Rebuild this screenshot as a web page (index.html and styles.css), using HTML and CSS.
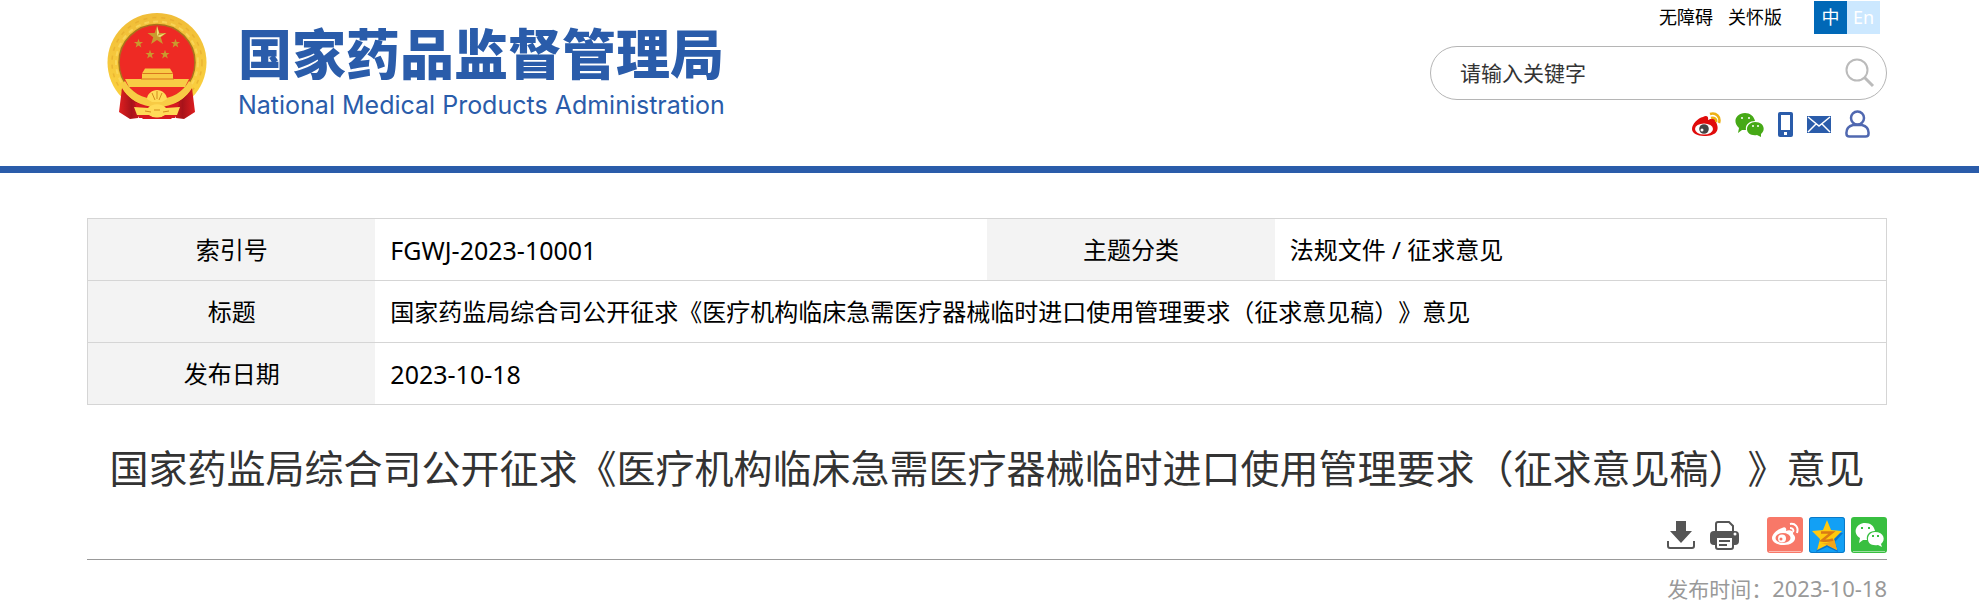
FILE: index.html
```
<!DOCTYPE html>
<html lang="zh-CN">
<head>
  <meta charset="UTF-8">
  <meta name="viewport" content="width=device-width, initial-scale=1.0">
  <title>国家药监局综合司公开征求意见</title>
  <link rel="stylesheet" href="styles.css">
</head>
<body>
  <!-- 头部 -->
  <header class="header">
    <div class="wrap header-inner">
      <div class="logo">
        <svg class="emblem" viewBox="0 0 100 106" aria-hidden="true">
          <defs>
            <linearGradient id="gold" x1="0" y1="0" x2="0" y2="1">
              <stop offset="0" stop-color="#f0bd38"/>
              <stop offset="1" stop-color="#fcd440"/>
            </linearGradient>
            <linearGradient id="drape" x1="0" y1="0" x2="1" y2="0">
              <stop offset="0" stop-color="#e01f20"/>
              <stop offset=".5" stop-color="#a8131a"/>
              <stop offset="1" stop-color="#dd1d20"/>
            </linearGradient>
            <path id="star" d="M0-10 2.4-3.1H9.5L3.8 1.2 5.9 8.1 0 4-5.9 8.1-3.8 1.2-9.5-3.1H-2.4Z"/>
          </defs>
          <circle cx="50" cy="49.500" r="49.500" fill="url(#gold)"/>
          <circle cx="50" cy="49.500" r="45" fill="none" stroke="#e2a62c" stroke-width="1.500" stroke-dasharray="4 5" opacity=".6"/>
          <circle cx="50" cy="49.500" r="41" fill="none" stroke="#fbdc62" stroke-width="2" stroke-dasharray="5 4" opacity=".7"/>
          <circle cx="50" cy="49.500" r="38" fill="#ee2a24" stroke="#a8741c" stroke-width="1.500"/>
          <g fill="#c99a2e">
            <use href="#star" x="50" y="23"/>
            <use href="#star" transform="translate(31.500 30.500) scale(.48)"/>
            <use href="#star" transform="translate(68.500 30.500) scale(.48)"/>
            <use href="#star" transform="translate(43 41.500) scale(.48)"/>
            <use href="#star" transform="translate(58 41.500) scale(.48)"/>
          </g>
          <path fill="#f4e07a" d="M50 13l2 7-2 3zM50 23l9-3-6 4z"/>
          <path fill="#f8cb45" d="M38 55.500h25l3 5H35zM35 61h31v5H35zM18 66h64l-4 8H22z"/>
          <path stroke="#d9771f" stroke-width="1" d="M36 60.500h29M34 66h33"/>
          <path fill="url(#drape)" d="M15 75c6 10 14 14 22 17l-6 13-8 1-11-7z"/>
          <path fill="url(#drape)" d="M85 75c-6 10-14 14-22 17l6 13 8 1 11-7z"/>
          <path fill="#d71920" d="M28 90h44l-4 15H32z"/>
          <path fill="#f8cb45" d="M14 72c6 14 20 22 36 22s30-8 36-22l-4-4c-6 11-17 18-32 18s-26-7-32-18z"/>
          <path fill="#ffdb58" d="M40 86c0-5 5-9 10-9s10 4 10 9l-5 3H45zM27 94l14 1c4-5 14-5 18 0l14-1-3 8-12 0c-5 4-11 4-16 0l-12 0z"/>
          <path stroke="#d28b1c" fill="none" d="M50 78v8M45 80l3 7M55 80l-3 7M38 98l6 1M62 98l-6 1M47 97h6"/>
          <path fill="#d71920" d="M33 103h10c4 2 10 2 14 0h10l-3 3H36z"/>
        </svg>
        <div class="logo-text">
          <div class="logo-cn">国家药品监督管理局</div>
          <div class="logo-en">National Medical Products Administration</div>
        </div>
      </div>

      <div class="tools">
        <div class="top-links">
          <a href="#">无障碍</a>
          <a href="#">关怀版</a>
          <div class="lang">
            <a class="on" href="#">中</a>
            <a href="#">En</a>
          </div>
        </div>
        <form class="search">
          <input type="text" placeholder="请输入关键字" aria-label="请输入关键字">
          <button type="button" aria-label="搜索">
            <svg width="30" height="30" viewBox="0 0 30 30" fill="none" stroke="#bbb" stroke-width="2">
              <circle cx="12" cy="12" r="10.500"/>
              <path stroke-width="3" d="M19 19l9 9"/>
            </svg>
          </button>
        </form>
        <nav class="media">
          <a href="#" aria-label="微博">
            <svg width="29" height="25" viewBox="0 0 29 25">
              <path fill="#e00b0b" d="M11 5c3-2 6-1 5 3 4-2 9-2 8 2 4 8 1 14-12 14C5 24 0 21 0 17 0 12 6 6 11 5z"/>
              <ellipse cx="12" cy="17" rx="9" ry="5.500" fill="#fff"/>
              <circle cx="12" cy="17" r="4.800" fill="#444"/>
              <circle cx="10" cy="18" r="1.500" fill="#fff"/>
              <path fill="none" stroke="#edb012" stroke-width="2.500" d="M18 2c6-2 11 3 9 9M19 6c3-1 6 1 5 4"/>
            </svg>
          </a>
          <a href="#" aria-label="微信">
            <svg width="29" height="25" viewBox="0 0 29 25">
              <path fill="#46a916" d="M10 1c5 0 9 3 10 8-6 0-10 4-9 9H7l-4 3 1-5C-3 10 1 1 10 1z"/>
              <path fill="#46a916" d="M20 10c9 0 11 8 6 12v3l-4-2c-6 1-10-2-10-6s4-7 8-7z"/>
              <path stroke="#fff" stroke-width="1.500" d="M6 6h2M13 6h2M17 14h2M22 14h2"/>
            </svg>
          </a>
          <a href="#" aria-label="移动端">
            <svg width="15" height="25" viewBox="0 0 15 25">
              <rect width="15" height="25" rx="2" fill="#2a5caa"/>
              <path fill="#fff" d="M3 3h9v15H3zM6 20h3v3H6z"/>
            </svg>
          </a>
          <a href="#" aria-label="邮箱">
            <svg width="24" height="17" viewBox="0 0 24 17">
              <path fill="#2a5caa" d="M0 0h24v17H0z"/>
              <path fill="none" stroke="#fff" stroke-width="1.500" d="M1 1l11 9L23 1M1 16l8-8M23 16l-8-8"/>
            </svg>
          </a>
          <a href="#" aria-label="用户">
            <svg width="25" height="28" viewBox="0 0 25 28" fill="none" stroke="#5068b0" stroke-width="2.500">
              <circle cx="12.500" cy="8" r="6.500"/>
              <path d="M8 15c-4 1-7 4-6.500 9 0 2 1 2.500 3 2.500h16c2 0 3-.5 3-2.500C24 19 21 16 17 15z"/>
            </svg>
          </a>
        </nav>
      </div>
    </div>
  </header>

  <main class="wrap">
    <!-- 文件信息 -->
    <table class="info">
      <tr>
        <th>索引号</th>
        <td class="num">FGWJ-2023-10001</td>
        <th>主题分类</th>
        <td>法规文件 / 征求意见</td>
      </tr>
      <tr>
        <th>标题</th>
        <td colspan="3">国家药监局综合司公开征求《医疗机构临床急需医疗器械临时进口使用管理要求（征求意见稿）》意见</td>
      </tr>
      <tr>
        <th>发布日期</th>
        <td class="num" colspan="3">2023-10-18</td>
      </tr>
    </table>

    <h1 class="title">国家药监局综合司公开征求《医疗机构临床急需医疗器械临时进口使用管理要求（征求意见稿）》意见</h1>

    <!-- 下载、打印、分享 -->
    <div class="actions">
      <button type="button" aria-label="下载">
        <svg width="28" height="28" viewBox="0 0 28 28">
          <path fill="#555" d="M9 0h10v10h6L14 22 3 10h6z"/>
          <path fill="none" stroke="#555" stroke-width="2" d="M1 20v5q0 2 2 2h22q2 0 2-2v-5"/>
        </svg>
      </button>
      <button type="button" aria-label="打印">
        <svg width="29" height="29" viewBox="0 0 29 29">
          <rect y="10" width="29" height="14" rx="4" fill="#555"/>
          <path fill="#fff" stroke="#555" stroke-width="2" d="M6 11V3q0-2 2-2h11l4 4v6zM6 16h17v10q0 2-2 2H8q-2 0-2-2z"/>
          <path stroke="#555" stroke-width="2" d="M9 20h11M9 24h8"/>
          <circle cx="25" cy="13" r="1.500" fill="#fff"/>
        </svg>
      </button>
      <div class="share">
        <a class="weibo" href="#" aria-label="分享到微博">
          <svg width="36" height="36" viewBox="0 0 36 36">
            <path stroke="#fff" opacity=".5" d="M2 34.500h32"/>
            <path fill="#fff" d="M15 11c3-2 5 0 4 3 4-2 8 0 7 3 5 4 1 11-9 11-7 0-12-3-12-7 0-4 6-9 10-10z"/>
            <ellipse cx="16" cy="21" rx="7.500" ry="5" fill="#f87868"/>
            <circle cx="15" cy="21.500" r="4" fill="#fff"/>
            <circle cx="14" cy="22" r="1.500" fill="#f87868"/>
            <path fill="none" stroke="#fff" stroke-width="2" d="M23 7c5-1 9 3 7 9M23 11c3 0 4 2 3 4"/>
          </svg>
        </a>
        <a class="qzone" href="#" aria-label="分享到QQ空间">
          <svg width="36" height="36" viewBox="0 0 36 36">
            <rect x=".5" y=".5" width="35" height="35" rx="2.500" fill="none" stroke="#0b79c6"/>
            <path fill="#0a76cf" d="M18 6l4 9 12 1-8 9 3 10-11-5-11 5z"/>
            <path fill="#ffc90e" d="M18 3l4 10 11 1-8 8 3 11-10-5-10 5 3-11-8-8 11-1z"/>
            <path fill="#f3a51a" d="M25 22l3 11-10-5-6-2q8 1 13-4z"/>
            <path fill="none" stroke="#d97a14" stroke-width="2.500" d="M12 15.500h11l-10 8q5 1 11-1"/>
          </svg>
        </a>
        <a class="wechat" href="#" aria-label="分享到微信">
          <svg width="36" height="36" viewBox="0 0 36 36">
            <path stroke="#fff" opacity=".5" d="M2 34.500h32"/>
            <path fill="#fff" d="M14 6c6 0 9 3 10 8-6 0-9 4-8 9h-4l-4 3 1-5C1 16 5 6 14 6z"/>
            <path fill="#fff" d="M24 15c9 0 11 8 6 12l1 3-4-2c-7 1-10-2-10-6s3-7 7-7z"/>
            <path stroke="#38bf40" stroke-width="2" d="M10 11h2M17 11h2M21 19h2M26 19h2"/>
          </svg>
        </a>
      </div>
    </div>
    <p class="date">发布时间：<span>2023-10-18</span></p>
  </main>
</body>
</html>
```
FILE: styles.css
```
* {
  box-sizing: border-box;
}

body {
  margin: 0;
  background: #fff;
  color: #000;
  font-family: "Noto Sans", "Noto Sans CJK SC", sans-serif;
  text-spacing-trim: space-all;
}

a {
  color: inherit;
  text-decoration: none;
}

button {
  padding: 0;
  border: none;
  background: none;
  cursor: pointer;
}

svg {
  display: block;
}

.wrap {
  margin: 0 92px 0 87px;
}

/* 头部 */
.header {
  border-bottom: 7px solid #2a5caa;
}

.header-inner {
  display: flex;
  justify-content: space-between;
  height: 166px;
}

.logo {
  display: flex;
  gap: 31px;
  padding: 13px 0 0 20px;
}

.emblem {
  width: 100px;
  height: 106px;
}

.logo-text {
  padding-top: 13px;
  color: #2a5caa;
  white-space: nowrap;
}

.logo-cn {
  font-size: 54px;
  line-height: 56px;
  font-weight: 900;
}

.logo-en {
  font-family: Inter, "Liberation Sans", Arial, sans-serif;
  font-size: 25px;
  line-height: 46px;
}

/* 右侧工具 */
.tools {
  width: 457px;
}

.top-links {
  display: flex;
  justify-content: flex-end;
  gap: 15px;
  padding: 1px 7px 0 0;
  font-size: 18px;
  line-height: 33px;
}

.lang {
  display: flex;
  margin-left: 10px;
  color: #fff;
  text-align: center;
}

.top-links .lang {
  margin-left: 17px;
}

.lang a {
  width: 33px;
  background: #cce8ff;
}

.lang .on {
  background: #0068b7;
}

.search {
  display: flex;
  align-items: center;
  height: 54px;
  margin-top: 12px;
  padding: 0 11px 0 29px;
  border: 1px solid #b5b5b5;
  border-radius: 27px;
}

.search input {
  flex: 1;
  min-width: 0;
  padding: 0;
  border: none;
  outline: none;
  font-family: inherit;
  font-size: 21px;
}

.search input::placeholder {
  color: #333;
  opacity: 1;
}

.media {
  display: flex;
  justify-content: flex-end;
  align-items: center;
  gap: 14px;
  padding: 10px 17px 0 0;
}

/* 文件信息 */
.info {
  width: 100%;
  margin-top: 45px;
  border: 1px solid #d5d5d5;
  border-collapse: collapse;
  table-layout: fixed;
  font-size: 24px;
  line-height: 36px;
}

.info tr {
  height: 62px;
  border-bottom: 1px solid #d5d5d5;
}

.info th {
  width: 16%;
  padding: 0;
  background: #f3f3f3;
  font-weight: normal;
}

.info td {
  width: 34%;
  padding: 0 15px;
}

.info .num {
  font-size: 25px;
}

.title {
  margin: 31px 0 0;
  color: #333;
  font-size: 39px;
  font-weight: normal;
  line-height: 64px;
  text-align: center;
}

/* 操作栏 */
.actions {
  display: flex;
  justify-content: flex-end;
  align-items: center;
  gap: 15px;
  margin-top: 17px;
  padding-bottom: 6px;
  border-bottom: 1px solid #999;
}

.share {
  display: flex;
  gap: 6px;
  margin-left: 13px;
}

.share a {
  border-radius: 3px;
}

.weibo {
  background: #f87868;
}

.qzone {
  background: #12a0f5;
}

.wechat {
  background: #38bf40;
}

.date {
  margin: 12px 0 0;
  color: #999;
  font-size: 21px;
  line-height: 32px;
  text-align: right;
}

.date span {
  font-size: 22px;
}
```
